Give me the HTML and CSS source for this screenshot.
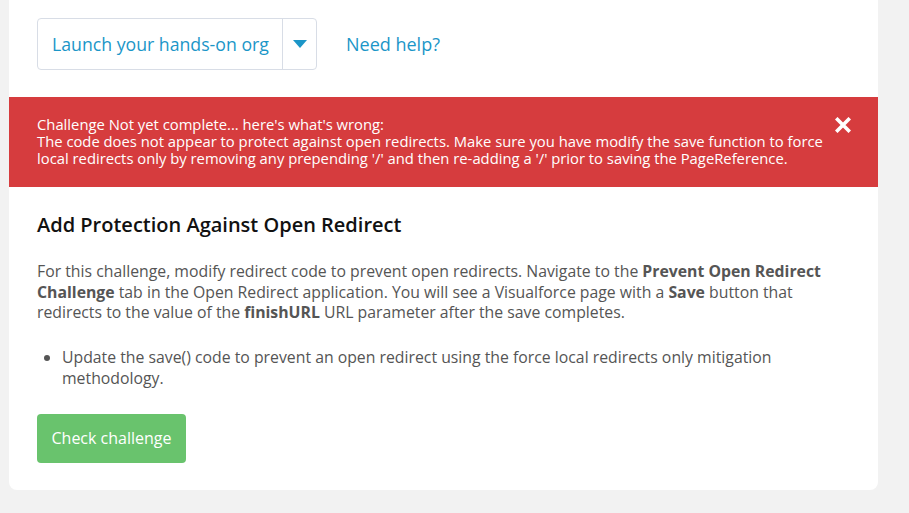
FILE: index.html
```html
<!DOCTYPE html>
<html lang="en">
<head>
  <meta charset="UTF-8" />
  <title>Add Protection Against Open Redirect</title>
  <link rel="stylesheet" href="styles.css">
</head>
<body>

<div class="card">
  <div class="launch-row">
    <div class="launch-button">
      <span class="launch-label">Launch your hands-on org</span>
      <span class="launch-toggle">
        <svg width="16" height="10" viewBox="0 0 16 10"><path d="M1 1 L15 1 L8 9 Z" fill="#1b96c8"/></svg>
      </span>
    </div>
    <a href="#" class="help-link">Need help?</a>
  </div>

  <div class="error-banner">
    <div class="error-text">
      Challenge Not yet complete... here's what's wrong:<br>
      The code does not appear to protect against open redirects. Make sure you have modify the save function to force local redirects only by removing any prepending '/' and then re-adding a '/' prior to saving the PageReference.
    </div>
    <span class="error-close">
      <svg width="16" height="16" viewBox="0 0 16 16"><path d="M2.5 2.5 L13.5 13.5 M13.5 2.5 L2.5 13.5" stroke="#fff" stroke-width="3.6" stroke-linecap="square"/></svg>
    </span>
  </div>

  <div class="challenge">
    <h2>Add Protection Against Open Redirect</h2>
    <p>For this challenge, modify redirect code to prevent open redirects. Navigate to the <b>Prevent Open Redirect Challenge</b> tab in the Open Redirect application. You will see a Visualforce page with a <b>Save</b> button that redirects to the value of the <b>finishURL</b> URL parameter after the save completes.</p>
    <ul>
      <li>Update the save() code to prevent an open redirect using the force local redirects only mitigation methodology.</li>
    </ul>
    <button class="check-button">Check challenge</button>
  </div>
</div>

</body>
</html>
```

FILE: styles.css
```css
* { margin: 0; padding: 0; box-sizing: border-box; }

body {
  font-family: 'Open Sans', sans-serif;
  background: #f2f2f2;
  padding-left: 9px;
  color: #555;
}

.card {
  width: 869px;
  background: #fff;
  border-radius: 0 0 8px 8px;
  padding-bottom: 27px;
}

.launch-row {
  display: flex;
  align-items: center;
  gap: 29px;
  padding: 18px 28px 0;
}

.launch-button {
  display: flex;
  height: 52px;
  width: 280px;
  border: 1px solid #d8dde6;
  border-radius: 4px;
}

.launch-label {
  flex: 1;
  display: flex;
  align-items: center;
  padding-left: 14px;
  font-size: 17.7px;
  color: #1b96c8;
}

.launch-toggle {
  width: 34px;
  border-left: 1px solid #d8dde6;
  display: flex;
  align-items: center;
  justify-content: center;
}

.help-link {
  font-size: 18px;
  color: #1b96c8;
  text-decoration: none;
}

.error-banner {
  position: relative;
  margin-top: 27px;
  height: 90px;
  background: #d63c3e;
  color: #fff;
  padding: 19px 45px 0 28px;
}

.error-text {
  font-size: 14.8px;
  line-height: 17px;
}

.error-close {
  position: absolute;
  top: 20px;
  right: 27px;
  line-height: 0;
}

.challenge {
  padding: 0 28px;
}

.challenge h2 {
  margin-top: 25px;
  font-size: 20px;
  font-weight: 600;
  color: #111;
  line-height: 26px;
}

.challenge p {
  margin-top: 23px;
  font-size: 15.8px;
  line-height: 20.5px;
}

.challenge ul {
  margin-top: 24px;
  padding-left: 25px;
  font-size: 15.8px;
  line-height: 21px;
}

.check-button {
  margin-top: 25px;
  display: block;
  background: #69c36d;
  color: #fff;
  border: none;
  border-radius: 4px;
  height: 49px;
  width: 149px;
  font-family: 'Open Sans', sans-serif;
  font-size: 16px;
}
```
